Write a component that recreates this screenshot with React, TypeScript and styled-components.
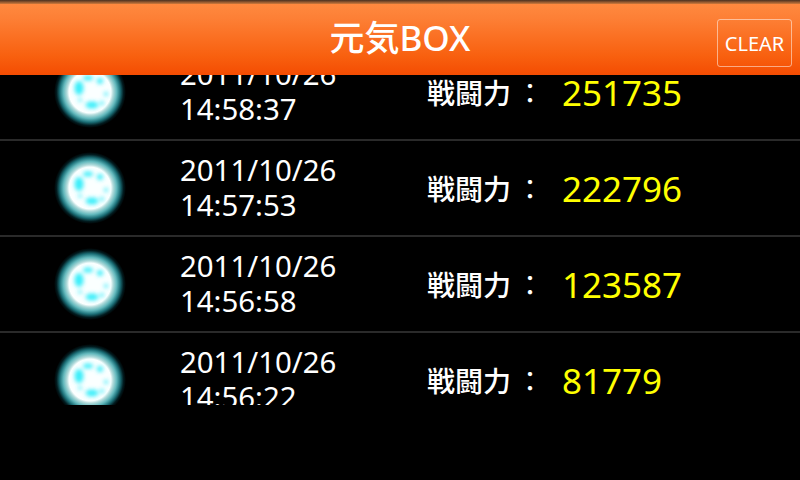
import React from 'react';
import styled, { createGlobalStyle } from 'styled-components';

const GlobalStyle = createGlobalStyle`
  html, body {
    margin: 0;
    padding: 0;
    width: 800px;
    height: 480px;
    overflow: hidden;
    background: #000;
    font-family: "Noto Sans", "Open Sans", "Noto Sans CJK JP", sans-serif;
  }
`;

const entries = [
  { date: '2011/10/26', time: '14:58:37', power: 251735 },
  { date: '2011/10/26', time: '14:57:53', power: 222796 },
  { date: '2011/10/26', time: '14:56:58', power: 123587 },
  { date: '2011/10/26', time: '14:56:22', power: 81779 },
];

function Orb() {
  return (
    <OrbSvg viewBox="0 0 80 80" width="80" height="80">
      <defs>
        <radialGradient id="halo">
          <stop offset="0.58" stopColor="#fbffff" />
          <stop offset="0.64" stopColor="#b4dcdc" />
          <stop offset="0.74" stopColor="#62b8bc" />
          <stop offset="0.84" stopColor="#1c7078" />
          <stop offset="0.93" stopColor="#021c20" />
          <stop offset="1" stopColor="#000" />
        </radialGradient>
        <filter id="soft" x="-50%" y="-50%" width="200%" height="200%">
          <feGaussianBlur stdDeviation="2.2" />
        </filter>
      </defs>
      <circle cx="40" cy="40" r="36" fill="url(#halo)" />
      <g filter="url(#soft)" fill="#38eefa">
        <ellipse cx="29" cy="36" rx="4.5" ry="7" />
        <ellipse cx="38" cy="26" rx="5" ry="2.5" />
        <circle cx="50" cy="29" r="3" />
        <circle cx="56" cy="42" r="2" />
        <ellipse cx="42" cy="53" rx="6.5" ry="3.5" />
        <circle cx="52" cy="51" r="2" />
        <circle cx="30" cy="48" r="1.8" />
      </g>
    </OrbSvg>
  );
}

export default function App() {
  return (
    <Screen>
      <GlobalStyle />
      <Header>
        <Title>元気BOX</Title>
        <ClearButton>CLEAR</ClearButton>
      </Header>
      <ListViewport>
        <List>
          {entries.map((e) => (
            <Row key={e.time}>
              <OrbCell>
                <Orb />
              </OrbCell>
              <Stamp>
                <div>{e.date}</div>
                <div>{e.time}</div>
              </Stamp>
              <PowerLabel>
                戦闘力<Colon>：</Colon>
              </PowerLabel>
              <PowerValue>{e.power}</PowerValue>
            </Row>
          ))}
        </List>
      </ListViewport>
    </Screen>
  );
}

const Screen = styled.div`
  width: 800px;
  height: 480px;
  background: #000;
  overflow: hidden;
`;

const Header = styled.header`
  position: relative;
  z-index: 1;
  height: 75px;
  box-sizing: border-box;
  display: flex;
  align-items: center;
  justify-content: center;
  background: linear-gradient(#ff8c42 0%, #fd7f35 25%, #f8600f 75%, #f44c02 100%);
  &::before {
    content: '';
    position: absolute;
    top: 0;
    left: 0;
    right: 0;
    height: 4px;
    background: linear-gradient(#4a3020, #d07a3c);
  }
`;

const Title = styled.h1`
  margin: 0;
  color: #fff;
  font-size: 35px;
  font-weight: 500;
  line-height: 75px;
`;

const ClearButton = styled.button`
  position: absolute;
  top: 19px;
  right: 8px;
  width: 75px;
  height: 48px;
  padding: 0;
  box-sizing: border-box;
  background: transparent;
  border: 1px solid rgba(255, 255, 255, 0.5);
  border-radius: 3px;
  color: #fff;
  font-family: inherit;
  font-size: 20px;
`;

const ListViewport = styled.main`
  height: 330px;
  overflow: hidden;
`;

const List = styled.div`
  margin-top: -30px;
`;

const Row = styled.div`
  height: 96px;
  box-sizing: border-box;
  display: flex;
  align-items: center;
  border-bottom: 2px solid #2a2a2a;
`;

const OrbCell = styled.div`
  width: 180px;
  padding-left: 50px;
  box-sizing: border-box;
  flex: none;
  display: flex;
`;

const OrbSvg = styled.svg`
  display: block;
`;

const Stamp = styled.div`
  width: 247px;
  flex: none;
  color: #fff;
  font-size: 29.4px;
  line-height: 35px;
`;

const PowerLabel = styled.div`
  width: 135px;
  flex: none;
  color: #fff;
  font-size: 28px;
  font-weight: 500;
  font-family: "Noto Sans CJK JP", sans-serif;
  white-space: nowrap;
`;

const Colon = styled.span`
  font-weight: 400;
  margin-left: 5px;
`;

const PowerValue = styled.div`
  color: #ff0;
  font-size: 35px;
`;
